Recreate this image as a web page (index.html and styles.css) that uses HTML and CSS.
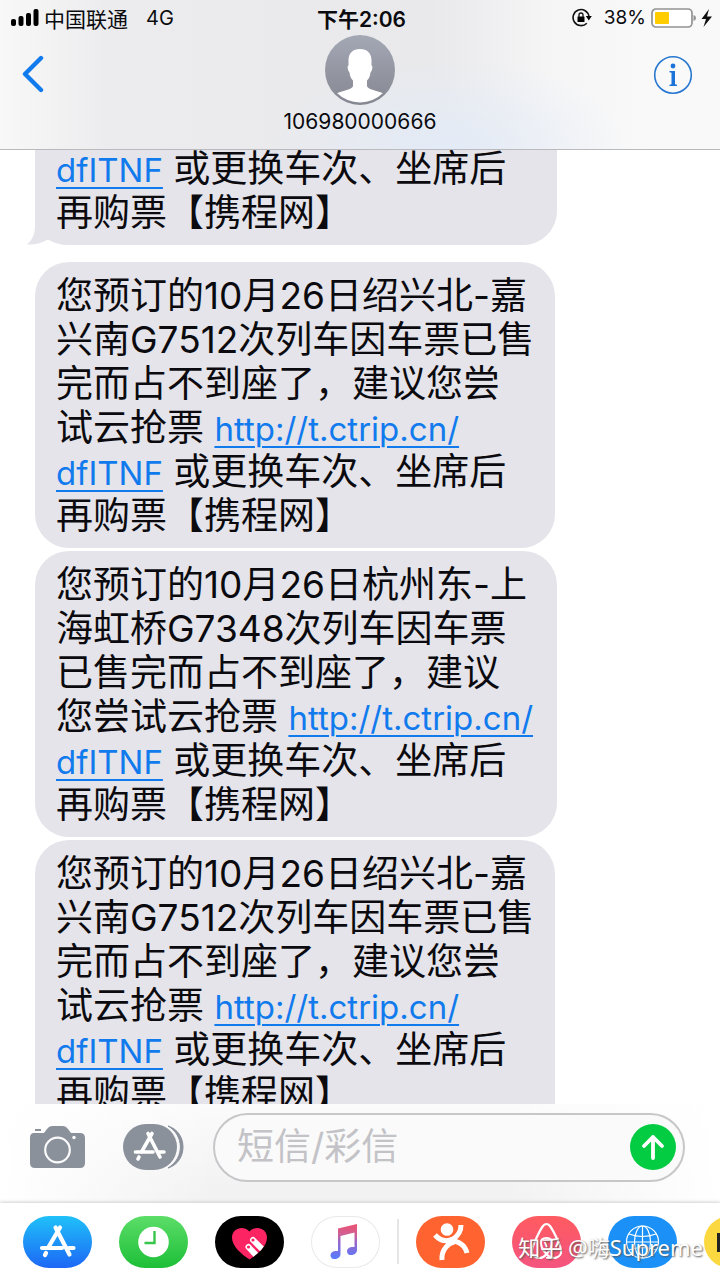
FILE: index.html
```html
<!DOCTYPE html>
<html lang="zh-CN">
<head>
<meta charset="utf-8">
<meta name="viewport" content="width=device-width, initial-scale=1">
<title>106980000666</title>
<link rel="stylesheet" href="styles.css">
</head>
<body>
<header class="header">
  <div class="status">
    <div class="status-side">
      <svg class="signal" width="30" height="18" viewBox="0 0 30 18" aria-hidden="true"><rect x="1" y="10" width="5" height="7" rx="2"/><rect x="8.500" y="7" width="5" height="10" rx="2"/><rect x="16" y="4" width="5" height="13" rx="2"/><rect x="23.500" y="0" width="5" height="17" rx="2"/></svg>
      <span>中国联通</span>
      <span class="network">4G</span>
    </div>
    <time class="clock">下午2:06</time>
    <div class="status-side status-right">
      <svg width="20" height="20" viewBox="0 0 20 20" aria-hidden="true"><path d="M14.800 15.200A8 8 0 1 1 17 8.500" fill="none" stroke="#111" stroke-width="1.600"/><path d="M13.800 8h6l-3 4.500z"/><rect x="5.500" y="8.500" width="7" height="5.500" rx=".6"/><path d="M7 9V7a2 2 0 0 1 4 0v2" fill="none" stroke="#111" stroke-width="1.300"/></svg>
      <span class="percent">38%</span>
      <svg width="62" height="20" viewBox="0 0 62 20" aria-hidden="true"><rect x="1" y="1" width="40" height="18" rx="4" fill="#fff" stroke="#929292" stroke-width="1.700"/><rect x="4" y="4" width="14" height="12" rx="1" fill="#fc0"/><path d="M42.500 7q2.500.5 2.500 3t-2.500 3z" fill="#929292"/><path d="M58 1 50.500 11h4.500l-2.500 8 8.500-10.500h-5z" fill="#111"/></svg>
    </div>
  </div>
  <nav class="nav">
    <button class="icon-button" type="button" aria-label="返回"><svg width="24" height="38" viewBox="0 0 24 38"><path d="M20 3 4 19l16 16" fill="none" stroke="#117bee" stroke-width="4.400" stroke-linecap="round" stroke-linejoin="round"/></svg></button>
    <div class="contact">
      <svg width="70" height="70" viewBox="0 0 70 70" aria-hidden="true"><defs><linearGradient id="avatar" x2="0" y2="1"><stop stop-color="#a4a8b5"/><stop offset="1" stop-color="#858791"/></linearGradient><clipPath id="face"><circle cx="35" cy="35" r="32.500"/></clipPath></defs><circle cx="35" cy="35" r="35" fill="url(#avatar)"/><path clip-path="url(#face)" d="M35 14c8 0 12 5 11.500 13v3.500c1.500 0 1 5-1 7-.5 4-1.500 6-3.500 8v5c0 5 14 5 20 10v10H8V60.500c6-5 20-5 20-10v-5c-2-2-3-4-3.500-8-2-2-2.500-7-1-7V27C23 19 27 14 35 14z" fill="#fff"/></svg>
      <h1 class="number">106980000666</h1>
    </div>
    <button class="icon-button info-button" type="button" aria-label="详细信息"><svg width="40" height="40" viewBox="0 0 40 40"><circle cx="20" cy="20" r="18.300" fill="none" stroke="#2878d0" stroke-width="1.600"/><circle cx="20" cy="11" r="2.400" fill="#1b72d8"/><path d="M16.500 16H22v13.200l2 .6V31h-7.500v-1.200l2-.6V17.800l-2-.5z" fill="#1b72d8"/></svg></button>
  </nav>
</header>

<main class="messages">
  <p class="bubble bubble-wide bubble-first"><svg class="tail" width="44" height="40" viewBox="0 0 44 40" aria-hidden="true"><path d="M8 0v20C8 30 5 35 0 39.500 8 40 15 38 21 34.500 29 39 35 40 44 40V0z" fill="#e5e4ea"/></svg><span class="content"><a href="#ticket">dfITNF</a> 或更换车次、坐席后<br>再购票【携程网】</span></p>
  <p class="bubble">您预订的10月26日绍兴北-嘉<br>兴南G7512次列车因车票已售<br>完而占不到座了，建议您尝<br>试云抢票 <a href="#ticket">http://t.ctrip.cn/<br>dfITNF</a> 或更换车次、坐席后<br>再购票【携程网】</p>
  <p class="bubble bubble-wide">您预订的10月26日杭州东-上<br>海虹桥G7348次列车因车票<br>已售完而占不到座了，建议<br>您尝试云抢票 <a href="#ticket">http://t.ctrip.cn/<br>dfITNF</a> 或更换车次、坐席后<br>再购票【携程网】</p>
  <p class="bubble bubble-last">您预订的10月26日绍兴北-嘉<br>兴南G7512次列车因车票已售<br>完而占不到座了，建议您尝<br>试云抢票 <a href="#ticket">http://t.ctrip.cn/<br>dfITNF</a> 或更换车次、坐席后<br>再购票【携程网】</p>
</main>

<form class="composer">
  <button class="icon-button" type="button" aria-label="相机"><svg width="57" height="44" viewBox="0 0 57 44"><path d="M5 8h10l3-4q2-3 5-3h11q3 0 5 3l3 4h9q5 0 5 5v25q0 5-5 5H6q-5 0-5-5V13q0-5 4-5z" fill="#8a919b"/><rect x="6" y="4" width="6" height="2" fill="#8a919b"/><circle cx="28.500" cy="25" r="12.300" fill="none" stroke="#fafafa" stroke-width="2.200"/><circle cx="45" cy="12.500" r="1.700" fill="#fff"/></svg></button>
  <button class="icon-button apps-button" type="button" aria-label="App 抽屉"><svg width="62" height="46" viewBox="0 0 62 46"><path d="M46 2c20 6 20 36 0 42 17-10 16-33 0-42z" fill="#8a919b" stroke="#8a919b" stroke-width="1"/><rect x="1" width="54" height="46" rx="23" fill="#8a919b"/><g fill="none" stroke="#fff" stroke-width="3.600" stroke-linecap="round"><path d="M26 9.500l12 23.500M30 9.500 19.500 28M13.500 28H31M37 28h5M17 33l-1 2"/></g></svg></button>
  <div class="field">
    <input class="field-input" type="text" placeholder="短信/彩信" aria-label="短信/彩信">
    <button class="icon-button" type="submit" aria-label="发送"><svg width="46" height="46" viewBox="0 0 46 46"><circle cx="23" cy="23" r="23" fill="#03cc43"/><path d="M23 34V13M14 22l9-9 9 9" fill="none" stroke="#fff" stroke-width="3.800" stroke-linecap="round" stroke-linejoin="round"/></svg></button>
  </div>
</form>

<footer class="drawer">
  <div class="app-group">
    <button class="app app-store" type="button" aria-label="App Store"><svg width="69" height="52" viewBox="0 0 69 52"><g fill="none" stroke="#fff" stroke-width="4.200" stroke-linecap="round"><path d="M32.500 11.500l14 27M37 11.500 25 32M19 32h20M46 32h4.500M23 37l-1 2"/></g></svg></button>
    <button class="app app-recent" type="button" aria-label="最近使用"><svg width="69" height="52" viewBox="0 0 69 52"><circle cx="34.500" cy="26" r="15.300" fill="#fff"/><path d="M35.500 15v12h-10" fill="none" stroke="#38c64a" stroke-width="2.400"/></svg></button>
    <button class="app app-touch" type="button" aria-label="Digital Touch"><svg width="69" height="52" viewBox="0 0 69 52"><defs><clipPath id="heart"><path d="M34.500 43.500C26 38 17 30 17 21.500c0-9 11-13 17.500-6 6.500-7 17.500-3 17.500 6 0 8.500-9 16.500-17.500 22z"/></clipPath></defs><g clip-path="url(#heart)"><path d="M15 8h40v38H15z" fill="#fd2463"/><path d="M38 24l14 14M33.500 31l13 14" stroke="#fff" stroke-width="6" stroke-linecap="round"/><circle cx="38" cy="24" r="1.600" fill="#fd2463"/><circle cx="33.500" cy="31" r="1.600" fill="#fd2463"/></g></svg></button>
    <button class="app app-music" type="button" aria-label="音乐"><svg width="69" height="52" viewBox="0 0 69 52"><defs><linearGradient id="note" gradientUnits="userSpaceOnUse" x1="38" y1="8" x2="36" y2="43"><stop stop-color="#ed526f"/><stop offset=".3" stop-color="#cf5f95"/><stop offset=".5" stop-color="#9a66c8"/><stop offset="1" stop-color="#587bff"/></linearGradient></defs><path d="M27 12.500l19-4.500v26c0 6-10 7-10 1.500 0-4 4-5 7.500-4.500V16.500L29.500 20v18c0 6-10 7-10 1.500 0-4 4-5 7.500-4.500z" fill="url(#note)"/></svg></button>
  </div>
  <span class="divider"></span>
  <div class="app-group">
    <button class="app app-dianping" type="button" aria-label="大众点评"><svg width="69" height="52" viewBox="0 0 69 52"><circle cx="31" cy="13.500" r="6.300" fill="#fff"/><path d="M19 19q8 9 18 4 8-5 8-14M26 44c-1-11 7-17 14-19M32 25c10-1 17 4 19 12" fill="none" stroke="#fff" stroke-width="5"/></svg></button>
    <button class="app app-airbnb" type="button" aria-label="Airbnb"><svg width="69" height="52" viewBox="0 0 69 52"><path d="M34.500 38C28 31 26 22 34.500 22S41 31 34.500 38C29 45 19 42 20 34c1-6 8-20 11-24q3.500-4 7 0c3 4 10 18 11 24 1 8-9 11-14.500 4z" fill="none" stroke="#fff" stroke-width="2.200"/></svg></button>
    <button class="app app-globe" type="button" aria-label="翻译"><svg width="69" height="52" viewBox="0 0 69 52"><g fill="none" stroke="#fff" stroke-width="1.200"><circle cx="34.500" cy="26" r="16"/><ellipse cx="34.500" cy="26" rx="8" ry="16"/><path d="M34.500 10v32M18.500 26h32M21 18q13.500 5 27 0M21 34q13.500-5 27 0"/></g></svg></button>
    <button class="app app-more" type="button" aria-label="更多应用"><svg width="69" height="52" viewBox="0 0 69 52"><path d="M13 17h8v19h-8z" fill="#222"/></svg></button>
  </div>
  <span class="watermark">知乎 @嗨Supreme</span>
</footer>
</body>
</html>
```
FILE: styles.css
```css
* { box-sizing: border-box; }

body {
  margin: 0;
  height: 100vh;
  display: flex;
  flex-direction: column;
  overflow: hidden;
  background: #fff;
  color: #0b0b0f;
  font-family: Inter, "Noto Sans CJK SC", sans-serif;
}

button { border: 0; padding: 0; background: none; }
svg { display: block; }

.header {
  flex: none;
  height: 150px;
  border-bottom: 1px solid #b9babd;
  background:
    radial-gradient(ellipse 180px 90px at 62% 100%, #e3ebf7, transparent),
    linear-gradient(90deg, #f8f8f8, #ececee 15%, #e9e9eb 60%, #f5f5f6 76%, #f9f9f9 90%);
}

.status {
  display: grid;
  grid-template-columns: 1fr auto 1fr;
  align-items: center;
  height: 35px;
  padding: 0 7px 0 10px;
  font-size: 21px;
}
.status-side { display: flex; align-items: center; }
.signal { margin-right: 4px; }
.network { margin-left: 18px; font-size: 20px; }
.clock { font-weight: 600; }
.status-right { justify-content: flex-end; }
.percent { margin: 0 5px 0 12px; font-size: 19px; }

.nav {
  display: grid;
  grid-template-columns: 1fr auto 1fr;
  align-items: start;
  padding: 0 21px;
}
.nav > .icon-button { margin-top: 20px; }
.nav > .info-button { justify-self: end; margin-right: 6px; }
.contact { display: flex; flex-direction: column; align-items: center; }
.number { margin: 5px 0 0; font-size: 21px; line-height: 24px; font-weight: 400; }

.messages {
  flex: 1;
  min-height: 0;
  overflow: hidden;
  display: flex;
  flex-direction: column;
  align-items: flex-start;
  gap: 3px;
  padding-left: 35px;
}
.bubble {
  position: relative;
  flex: none;
  min-width: 520px;
  margin: 0;
  padding: 12px 21px 10px;
  border-radius: 34px;
  background: #e5e4ea;
  font-size: 37px;
  line-height: 44px;
  white-space: nowrap;
}
.bubble-wide { min-width: 522px; }
.bubble-first {
  margin: -3px 0 14px;
  padding-top: 0;
  border-radius: 0 0 34px 34px;
}
.bubble-last { border-radius: 34px 34px 0 0; }
.bubble a {
  color: #117bee;
  font-size: 33px;
  line-height: 1;
  text-decoration-thickness: 2px;
  text-underline-offset: 5px;
}
.tail { position: absolute; left: -8px; bottom: 0; }
.content { position: relative; }

.composer {
  flex: none;
  display: flex;
  align-items: center;
  height: 99px;
  padding: 0 35px 13px 29px;
  background: linear-gradient(90deg, #fff, rgba(255, 255, 255, 0) 30% 70%, #fff), linear-gradient(#fbfbfc, #f1f1f2);
}
.apps-button { margin: 0 29px 0 36px; }
.field {
  flex: 1;
  min-width: 0;
  display: flex;
  align-items: center;
  height: 69px;
  padding: 0 7px 0 22px;
  border: 2px solid #c7c7ca;
  border-radius: 35px;
  background: #fafafa;
}
.field-input {
  flex: 1;
  min-width: 0;
  padding: 0;
  border: 0;
  outline: 0;
  background: none;
  font: 37px/44px Inter, "Noto Sans CJK SC", sans-serif;
}
.field-input::placeholder { color: #c3c3c7; opacity: 1; }

.drawer {
  position: relative;
  flex: none;
  display: flex;
  height: 77px;
  padding: 13px 0 0 23px;
  overflow: hidden;
  background: #fff;
  box-shadow: 0 -1px 3px #d0d0d0;
}
.app-group { display: flex; gap: 27px; }
.app { flex: none; width: 69px; height: 52px; border-radius: 26px; overflow: hidden; }
.app-store { background: linear-gradient(#1fc1f9, #1d67f5); }
.app-recent { background: linear-gradient(#5cdd68, #1dbf38); }
.app-touch { background: #000; }
.app-music { background: #fff; box-shadow: inset 0 0 0 1px #e9e9eb; }
.app-dianping { background: #ff632f; }
.app-airbnb { background: linear-gradient(#ff5b60, #f4547f); }
.app-globe { background: #1b91f7; }
.app-more { background: #fbd83f; }
.divider { flex: none; width: 2px; height: 45px; margin: 3px 17px 0; background: #e5e5e7; }
.watermark {
  position: absolute;
  right: 17px;
  top: 30px;
  color: #fff;
  font: 22px/28px "Noto Sans", "Noto Sans CJK SC", sans-serif;
  text-shadow: 1px 1px 2px #555;
}
```
